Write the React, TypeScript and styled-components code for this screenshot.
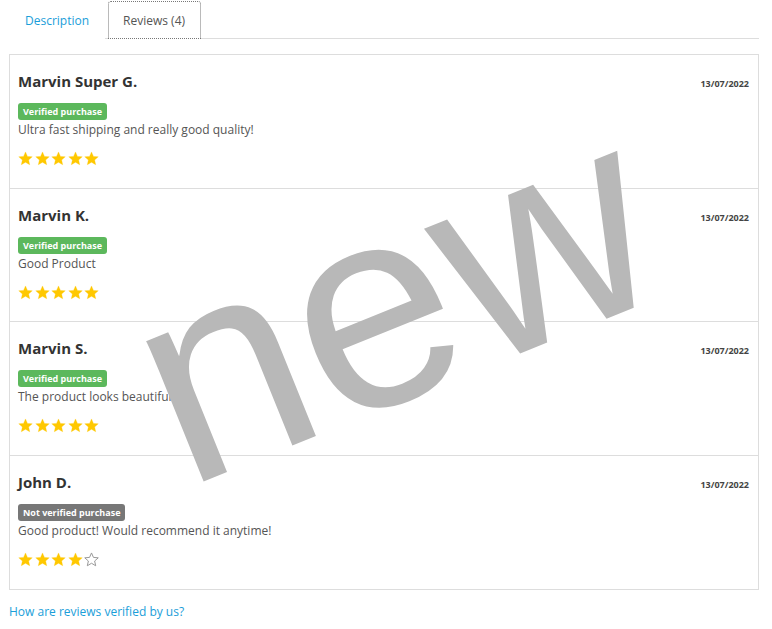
import React from "react";
import styled, { createGlobalStyle } from "styled-components";

const Global = createGlobalStyle`
  html, body { margin: 0; padding: 0; background: #fff; }
  body { font-family: "Open Sans", "Liberation Sans", sans-serif; color: #555; }
`;

const Page = styled.div`
  position: relative;
  width: 772px;
  height: 629px;
  overflow: hidden;
  padding: 0 13px 0 9px;
  box-sizing: border-box;
`;

const TabBar = styled.div`
  display: flex;
  gap: 3px;
  padding-top: 1px;
  border-bottom: 1px solid #ddd;
  margin-bottom: 15px;
`;

const Tab = styled.div<{ $active?: boolean }>`
  height: 36px;
  display: flex;
  align-items: center;
  padding: 0 15px 0 ${(p) => (p.$active ? "14px" : "15px")};
  font-size: 12px;
  margin-bottom: -1px;
  color: ${(p) => (p.$active ? "#555" : "#1a9ed9")};
  background: #fff;
  border: 1px dotted ${(p) => (p.$active ? "#777" : "transparent")};
  border-radius: 3px 3px 0 0;
`;

const Card = styled.div`
  border: 1px solid #ddd;
`;

const Review = styled.div<{ $last?: boolean; $h: number }>`
  height: ${(p) => p.$h}px;
  padding: 16px 9px 0 8px;
  box-sizing: border-box;
  border-bottom: ${(p) => (p.$last ? "none" : "1px solid #ddd")};
`;

const Header = styled.div`
  display: flex;
  justify-content: space-between;
  align-items: baseline;
`;

const Name = styled.div`
  font-size: 15px;
  font-weight: 700;
  color: #333;
  line-height: 20px;
`;

const DateText = styled.div`
  font-size: 9px;
  font-weight: 700;
  color: #444;
`;

const Badge = styled.div<{ $verified: boolean }>`
  display: inline-block;
  margin-top: 12px;
  height: 17px;
  line-height: 17px;
  padding: 0 5px;
  border-radius: 3px;
  font-size: 9px;
  font-weight: 700;
  color: #fff;
  background: ${(p) => (p.$verified ? "#5cb85c" : "#777")};
`;

const Text = styled.div`
  font-size: 12px;
  line-height: 20px;
  color: #555;
`;

const Stars = styled.div`
  display: flex;
  gap: 1.5px;
  margin-top: 11px;
`;

const HelpLink = styled.a`
  display: block;
  margin-top: 13px;
  font-size: 12px;
  color: #1a9ed9;
  text-decoration: none;
`;

const Watermark = styled.div`
  position: absolute;
  left: 392px;
  top: 298px;
  transform: translate(-50%, -50%) rotate(-22deg);
  font-family: "Liberation Sans", Arial, sans-serif;
  font-size: 287px;
  line-height: 1;
  color: #b8b8b8;
  pointer-events: none;
  white-space: nowrap;
`;

const Star = ({ filled }: { filled: boolean }) => (
  <svg width="15" height="15" viewBox="0 0 24 24">
    <path
      d="M12 1.5l3.1 7.1 7.7.7-5.8 5.1 1.7 7.6L12 18l-6.7 4 1.7-7.6-5.8-5.1 7.7-.7z"
      fill={filled ? "#ffc800" : "none"}
      stroke={filled ? "#ffc800" : "#999"}
      strokeWidth={filled ? 0.5 : 1.6}
      strokeLinejoin="round"
    />
  </svg>
);

const reviews = [
  { name: "Marvin Super G.", verified: true, text: "Ultra fast shipping and really good quality!", rating: 5, h: 134 },
  { name: "Marvin K.", verified: true, text: "Good Product", rating: 5, h: 133 },
  { name: "Marvin S.", verified: true, text: "The product looks beautiful!", rating: 5, h: 134 },
  { name: "John D.", verified: false, text: "Good product! Would recommend it anytime!", rating: 4, h: 133 },
];

export default function App() {
  return (
    <>
      <Global />
      <Page>
        <TabBar>
          <Tab>Description</Tab>
          <Tab $active>Reviews (4)</Tab>
        </TabBar>
        <Card>
          {reviews.map((r, i) => (
            <Review key={i} $h={r.h} $last={i === reviews.length - 1}>
              <Header>
                <Name>{r.name}</Name>
                <DateText>13/07/2022</DateText>
              </Header>
              <Badge $verified={r.verified}>
                {r.verified ? "Verified purchase" : "Not verified purchase"}
              </Badge>
              <Text>{r.text}</Text>
              <Stars>
                {[0, 1, 2, 3, 4].map((s) => (
                  <Star key={s} filled={s < r.rating} />
                ))}
              </Stars>
            </Review>
          ))}
        </Card>
        <HelpLink href="#">How are reviews verified by us?</HelpLink>
        <Watermark>new</Watermark>
      </Page>
    </>
  );
}
